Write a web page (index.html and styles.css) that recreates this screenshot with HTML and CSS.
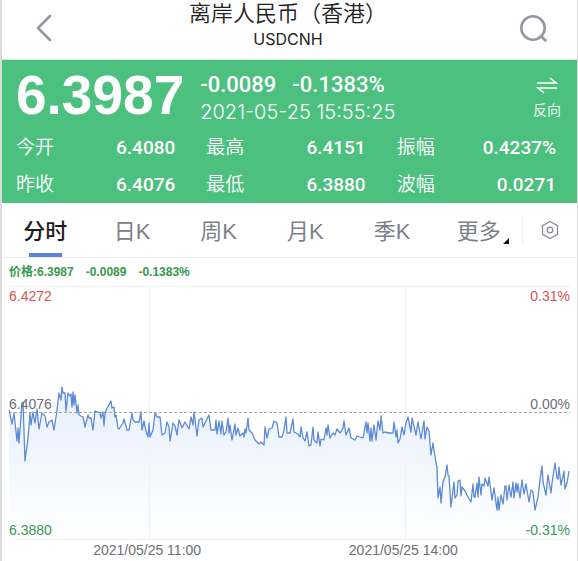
FILE: index.html
```html
<!DOCTYPE html>
<html lang="zh-CN">
<head>
  <meta charset="UTF-8">
  <meta name="viewport" content="width=device-width, initial-scale=1">
  <title>离岸人民币（香港）</title>
  <link rel="stylesheet" href="styles.css">
</head>
<body>
  <div class="page">
    <header class="topbar">
      <button class="icon-btn back" aria-label="返回">
        <svg width="18" height="30" viewBox="0 0 18 30"><path d="M15 3 L3 15 L15 27"/></svg>
      </button>
      <div class="title">
        <h1>离岸人民币（香港）</h1>
        <p>USDCNH</p>
      </div>
      <button class="icon-btn" aria-label="搜索">
        <svg width="30" height="30" viewBox="0 0 30 30"><circle cx="14" cy="15" r="11.7"/><path d="M22 23 L26.5 27.5"/></svg>
      </button>
    </header>

    <section class="quote">
      <div class="quote-main">
        <strong class="price">6.3987</strong>
        <div class="change">
          <div class="change-values"><span>-0.0089</span><span>-0.1383%</span></div>
          <time>2021-05-25 15:55:25</time>
        </div>
        <button class="reverse">
          <svg width="24" height="20" viewBox="0 0 24 20"><path d="M2 7 H21 L15 2 M22 12 H3 L9 17"/></svg>
          反向
        </button>
      </div>
      <dl class="stats">
        <div><dt>今开</dt><dd>6.4080</dd></div>
        <div><dt>最高</dt><dd>6.4151</dd></div>
        <div><dt>振幅</dt><dd>0.4237%</dd></div>
        <div><dt>昨收</dt><dd>6.4076</dd></div>
        <div><dt>最低</dt><dd>6.3880</dd></div>
        <div><dt>波幅</dt><dd>0.0271</dd></div>
      </dl>
    </section>

    <nav class="tabs">
      <button class="tab active">分时</button>
      <button class="tab">日K</button>
      <button class="tab">周K</button>
      <button class="tab">月K</button>
      <button class="tab">季K</button>
      <button class="tab more">更多</button>
      <button class="settings" aria-label="设置">
        <svg width="20" height="20" viewBox="0 0 20 20"><path d="M10 1.5 L17.5 5.7 V14.3 L10 18.5 L2.5 14.3 V5.7 Z"/><circle cx="10" cy="10" r="2.8"/></svg>
      </button>
    </nav>

    <section class="chart-box">
      <div class="legend"><span>价格:6.3987</span><span>-0.0089</span><span>-0.1383%</span></div>
      <div class="chart">
        <svg class="plot" viewBox="9 287 561 252" preserveAspectRatio="none">
          <defs>
            <linearGradient id="fade" x1="0" y1="387" x2="0" y2="539" gradientUnits="userSpaceOnUse">
              <stop offset="0" stop-color="#e6f0fd"/>
              <stop offset="0.55" stop-color="#f3f7fe"/>
              <stop offset="1" stop-color="#ffffff"/>
            </linearGradient>
          </defs>
          <path id="area" fill="url(#fade)"/>
          <path class="grid" d="M149.5 287 V539 M405.5 287 V539"/>
          <path class="base" d="M9 412.5 H570"/>
          <polyline id="line" class="line" points="9,410 12,424 14,413 17,441 18,428 19,443 22,403 23,402 25,461 28,438 30,413 31,425 33,412 35,423 37,409 39,429 42,413 45,416 47,427 49,422 52,420 54,430 56,417 57,410 59,393 61,400 62,387 63,393 65,393 66,411 68,393 70,396 71,394 72,407 73,392 74,405 75,395 77,413 78,405 79,415 83,417 85,427 88,415 89,418 91,418 93,430 95,411 100,413 101,418 103,412 104,426 105,413 107,408 109,405 111,401 112,408 114,407 115,417 116,415 118,428 119,429 123,423 124,419 127,430 129,430 132,413 133,420 135,422 139,422 141,412 142,430 144,421 146,431 148,437 149,423 150,437 153,430 155,413 157,417 160,417 162,435 165,433 167,422 169,427 170,441 173,423 175,426 177,435 179,420 182,428 185,422 189,429 191,417 193,425 194,412 197,436 199,420 202,418 203,427 207,419 209,415 211,430 215,430 216,420 217,434 219,421 221,434 222,421 224,435 226,432 228,418 229,433 230,425 232,440 235,424 236,435 238,428 240,436 243,433 244,437 245,429 246,433 248,418 249,430 252,433 255,440 257,442 259,444 261,442 264,445 265,427 267,438 269,429 272,428 274,421 277,423 279,437 282,437 284,430 286,417 287,433 290,433 293,419 294,432 298,434 300,437 301,427 303,438 305,441 307,432 309,446 311,445 313,427 314,440 317,443 318,432 320,446 321,439 324,440 326,428 327,435 328,425 330,438 333,433 335,435 337,429 340,433 343,428 344,421 346,435 349,428 351,438 355,440 357,436 363,438 366,422 367,433 368,423 370,441 371,428 372,441 374,425 376,440 378,421 380,430 381,416 383,433 385,432 389,433 393,433 394,422 396,437 397,430 398,443 400,439 402,427 404,435 406,423 408,417 411,432 412,418 416,435 418,422 421,439 424,421 425,439 427,427 429,431 431,455 433,443 436,463 437,467 438,498 440,487 441,503 443,482 445,477 447,465 448,475 449,476 451,507 454,482 455,498 457,495 458,481 460,480 461,496 462,487 465,491 468,497 471,502 473,484 474,497 475,497 477,483 478,497 479,477 481,495 482,484 484,486 485,478 488,486 489,477 492,500 494,488 497,510 498,497 499,510 501,495 503,504 505,486 506,486 507,500 509,485 511,497 513,482 514,498 516,483 517,492 518,484 520,498 522,480 524,494 526,484 529,502 531,490 533,492 535,510 538,497 540,480 542,466 543,482 546,495 548,475 551,493 552,483 555,463 557,478 558,479 559,467 561,485 564,471 565,489 567,483 569,471"/>
        </svg>
        <div class="scale">
          <div class="row up"><span>6.4272</span><span>0.31%</span></div>
          <div class="row mid"><span>6.4076</span><span>0.00%</span></div>
          <div class="row down"><span>6.3880</span><span>-0.31%</span></div>
        </div>
      </div>
      <div class="times"><span>2021/05/25 11:00</span><span>2021/05/25 14:00</span></div>
    </section>
  </div>
  <script>
    // fill the area under the price line
    const points = document.getElementById('line').getAttribute('points');
    document.getElementById('area').setAttribute('d', 'M9,539 L' + points + ' L569,539 Z');
  </script>
</body>
</html>
```
FILE: styles.css
```css
* { box-sizing: border-box; }
body { margin: 0; padding: 0 1px 0 2px; background: #dcdcde; font-family: "Liberation Sans", "Noto Sans CJK SC", sans-serif; color: #222; }
h1, p, dl, dd { margin: 0; }
button { border: 0; padding: 0; background: none; font-family: inherit; color: inherit; cursor: pointer; }
svg { display: block; fill: none; }
.page { min-height: 100vh; background: #fff; }

.topbar { display: flex; justify-content: space-between; align-items: flex-start; height: 60px; padding: 0 28px 0 33px; border-bottom: 1px solid #dcdfe0; }
.title { flex: 1; text-align: center; }
.title h1 { font-size: 22px; line-height: 27px; font-weight: 350; }
.title p { font-family: Inter, sans-serif; font-size: 16px; line-height: 24px; }
.icon-btn { padding-top: 13px; }
.icon-btn svg { stroke: #9697a3; stroke-width: 2.6; stroke-linecap: round; stroke-linejoin: round; }
.back { width: 22px; }

.quote { background: #4cc07e; color: #fff; padding: 4px 21px 0 14px; }
.quote-main { display: flex; align-items: center; height: 62px; }
.price { font-size: 55px; line-height: 56px; }
.change { margin-left: 16px; padding-top: 5px; }
.change-values { display: flex; gap: 16px; font: 500 22px/28px Roboto, sans-serif; }
.change time { display: block; font: 300 20px/26px Inter, sans-serif; }
.reverse { display: flex; flex-direction: column; align-items: center; gap: 4px; margin: 6px -5px 0 auto; font-size: 14px; line-height: 20px; font-weight: 350; }
.reverse svg { stroke: #fff; stroke-width: 1.6; }
.stats { display: grid; grid-template-columns: repeat(3, 1fr); column-gap: 31px; padding-top: 3px; }
.stats div { display: flex; justify-content: space-between; align-items: center; height: 37px; }
.stats dt { font-size: 19px; font-weight: 350; line-height: 28px; }
.stats dd { font: 500 19px/28px Roboto, sans-serif; }

.tabs { display: flex; height: 55px; border-bottom: 1px solid #ececf0; }
.tab { position: relative; flex: 1; padding-bottom: 2px; font-size: 22px; color: #7e7f89; }
.tab.active { color: #1c1c20; font-weight: 500; }
.tab.active::after { content: ""; position: absolute; left: 50%; bottom: 0; width: 33px; height: 4px; margin-left: -16px; background: #5b83df; }
.more::after { content: ""; position: absolute; right: 13px; bottom: 13px; border-left: 6px solid transparent; border-bottom: 6px solid #111; }
.settings { display: flex; align-items: center; justify-content: center; width: 55px; height: 28px; margin: auto 0; border-left: 1px solid #f0f0f3; }
.settings svg { stroke: #8b8c95; stroke-width: 1.3; }

.chart-box { padding: 0 7px; }
.legend { display: flex; gap: 12px; font-size: 12px; line-height: 28px; font-weight: bold; color: #36994d; }
.chart { display: grid; border-top: 1px solid #f1f1f4; border-bottom: 1px solid #f1f1f4; font-size: 14px; line-height: 18px; }
.plot, .scale { grid-area: 1 / 1; }
.plot { width: 100%; height: 252px; }
.grid { stroke: #f1f2f6; }
.base { stroke: #a4a4a6; stroke-dasharray: 3 2; }
.line { stroke: #5c8ad6; stroke-width: 1.3; stroke-linejoin: round; }
.scale { display: flex; flex-direction: column; }
.row { display: flex; justify-content: space-between; }
.up { color: #d9534f; }
.mid { margin: auto 0; padding-bottom: 18px; color: #6d6e73; }
.down { color: #36994d; }
.times { display: flex; justify-content: space-between; padding: 0 20% 0 15%; font-size: 14px; line-height: 21px; color: #6d6e73; }
```
